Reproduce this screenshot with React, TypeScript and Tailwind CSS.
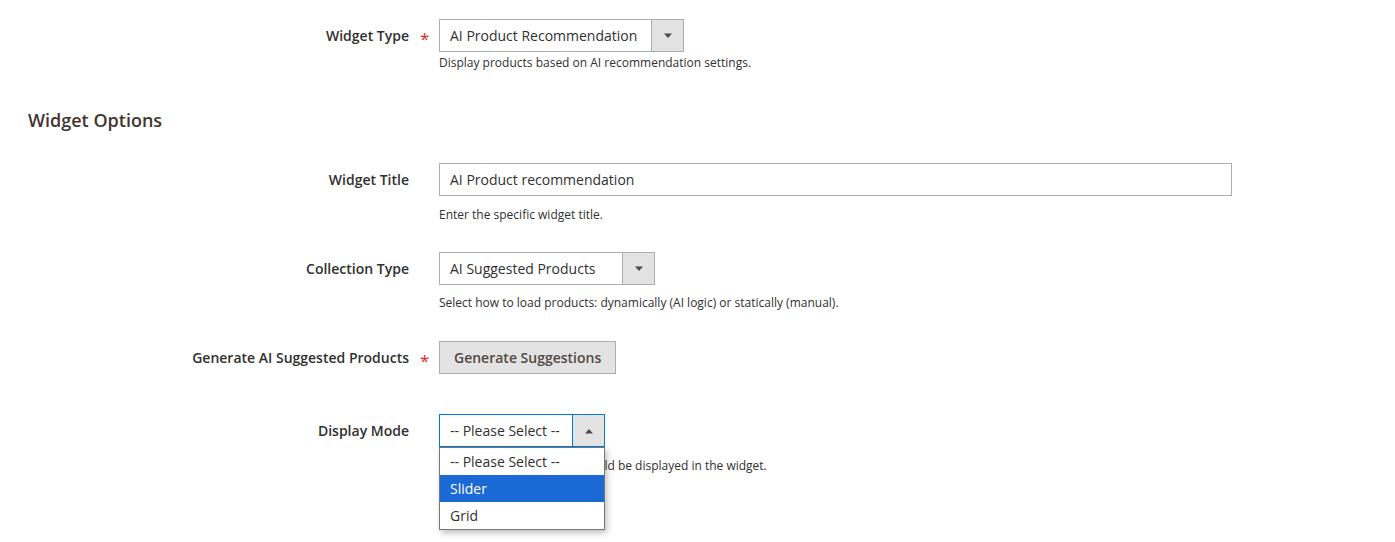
import type { ReactNode } from 'react'

const FONT = { fontFamily: '"Open Sans", "Noto Sans", sans-serif' }

function Arrow({ up = false }: { up?: boolean }) {
  return (
    <svg width="10" height="6" viewBox="0 0 10 6" className="block">
      {up ? <path d="M1 5.5 L5 1 L9 5.5 Z" fill="#514943" /> : <path d="M1 0.5 L9 0.5 L5 5 Z" fill="#514943" />}
    </svg>
  )
}

function Row({ label, required, children }: { label: string; required?: boolean; children: ReactNode }) {
  return (
    <div className="flex items-start">
      <div className="w-[409px] shrink-0 h-[33px] flex items-center justify-end text-[14px] font-semibold text-[#303030]">
        {label}
      </div>
      <div className="w-[30px] shrink-0 h-[33px] flex items-center pl-[11px]">
        {required && <span className="text-[#e22626] text-[17px] leading-none mt-[6px]">*</span>}
      </div>
      <div className="flex-1 min-w-0">{children}</div>
    </div>
  )
}

function Select({ value, width, open = false }: { value: string; width: number; open?: boolean }) {
  return (
    <div
      style={{ width }}
      className={`flex h-[33px] border bg-white ${open ? 'border-[#007bdb]' : 'border-[#adadad]'}`}
    >
      <div className="flex-1 flex items-center pl-[10px] text-[14px] text-[#303030] whitespace-nowrap">{value}</div>
      <div
        className={`w-[32px] flex items-center justify-center bg-[#e3e3e3] border-l ${
          open ? 'border-[#007bdb]' : 'border-[#adadad]'
        }`}
      >
        <Arrow up={open} />
      </div>
    </div>
  )
}

function Note({ children, top }: { children: ReactNode; top: string }) {
  return <div className={`${top} text-[12px] leading-[18px] text-[#303030]`}>{children}</div>
}

export default function App() {
  return (
    <div style={FONT} className="w-[1395px] h-[542px] bg-white overflow-hidden pt-[19px]">
      <Row label="Widget Type" required>
        <Select value="AI Product Recommendation" width={245} />
        <Note top="mt-[2px]">Display products based on AI recommendation settings.</Note>
      </Row>

      <h2 className="mt-[36px] pl-[28px] text-[18px] font-semibold leading-[24px] text-[#41362f]">Widget Options</h2>

      <div className="mt-[31px]">
        <Row label="Widget Title">
          <div className="w-[793px] h-[33px] border border-[#adadad] flex items-center pl-[10px] text-[14px] text-[#303030]">
            AI Product recommendation
          </div>
          <Note top="mt-[10px]">Enter the specific widget title.</Note>
        </Row>
      </div>

      <div className="mt-[28px]">
        <Row label="Collection Type">
          <Select value="AI Suggested Products" width={216} />
          <Note top="mt-[9px]">Select how to load products: dynamically (AI logic) or statically (manual).</Note>
        </Row>
      </div>

      <div className="mt-[29px]">
        <Row label="Generate AI Suggested Products" required>
          <button className="h-[33px] px-[14px] bg-[#e3e3e3] border border-[#adadad] text-[14px] font-semibold text-[#514943]">
            Generate Suggestions
          </button>
        </Row>
      </div>

      <div className="mt-[40px]">
        <Row label="Display Mode">
          <div className="relative">
            <Select value="-- Please Select --" width={166} open />
            <Note top="mt-[10px]">Select how the products should be displayed in the widget.</Note>
            <div className="absolute left-0 top-[33px] w-[166px] bg-white border border-[#767676] shadow-[2px_3px_6px_rgba(0,0,0,0.25)] text-[14px]">
              <div className="h-[27px] flex items-center pl-[10px] text-[#303030]">-- Please Select --</div>
              <div className="h-[27px] flex items-center pl-[10px] bg-[#1a69d4] text-white">Slider</div>
              <div className="h-[27px] flex items-center pl-[10px] text-[#303030]">Grid</div>
            </div>
          </div>
        </Row>
      </div>
    </div>
  )
}
